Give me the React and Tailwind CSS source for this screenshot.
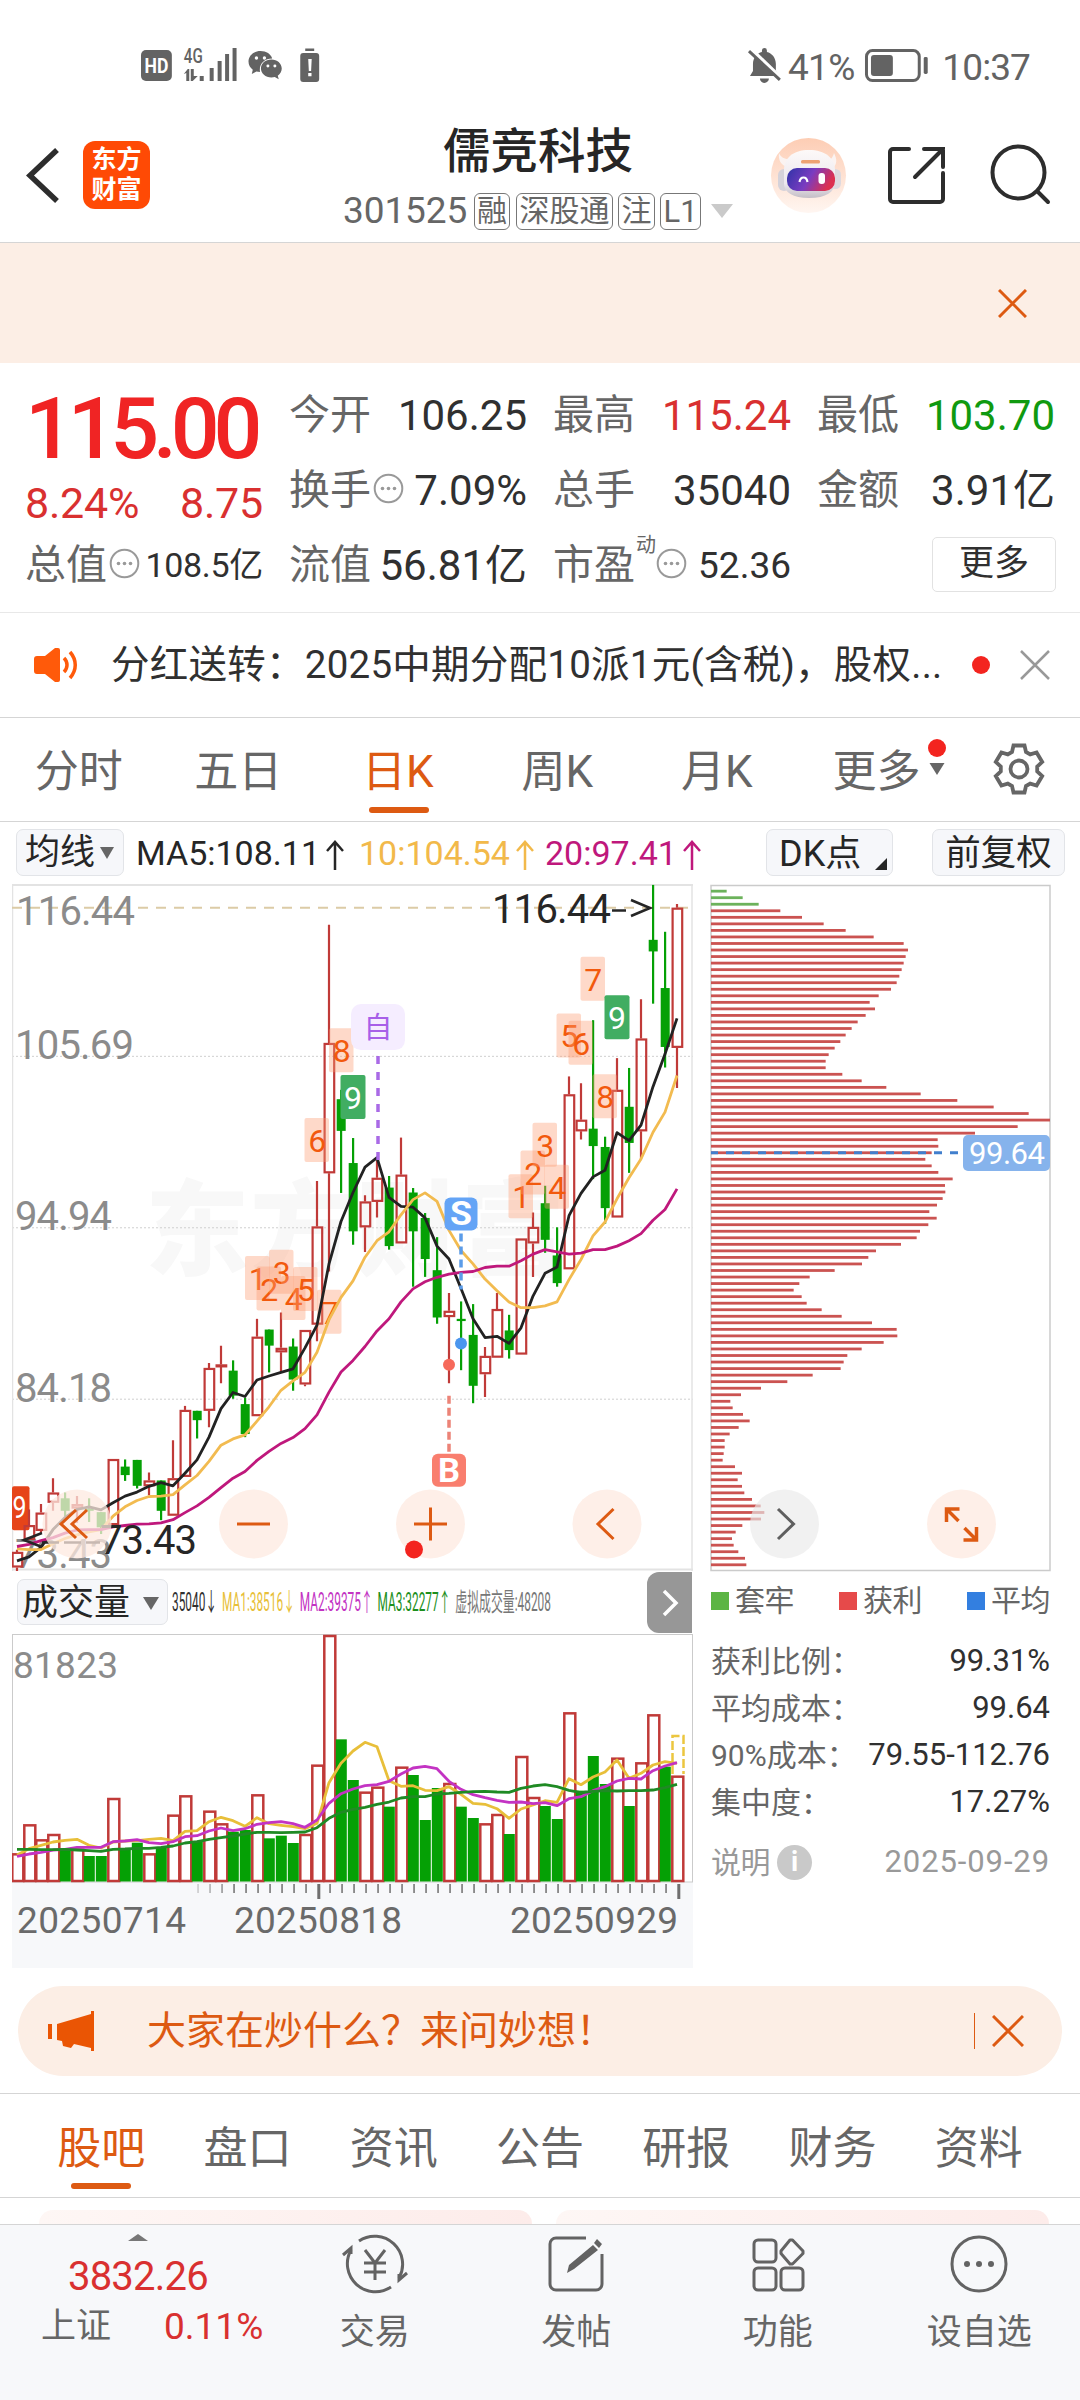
import React from "react";

const RED = "#c03a38";
const GREEN = "#05a005";

// [type, high, bodyTop, bodyBottom, low]
const candles = [
  ["r", 1500, 1505, 1540, 1548], ["r", 1410, 1445, 1478, 1478], ["r", 1398, 1417, 1458, 1462], ["r", 1340, 1372, 1395, 1413],
  ["g", 1372, 1385, 1413, 1425], ["r", 1380, 1398, 1408, 1440], ["g", 1385, 1408, 1413, 1438], ["g", 1416, 1416, 1450, 1465],
  ["r", 1297, 1297, 1445, 1445], ["g", 1298, 1314, 1333, 1346], ["g", 1299, 1299, 1357, 1363], ["r", 1327, 1345, 1358, 1378],
  ["g", 1345, 1345, 1413, 1434], ["r", 1255, 1340, 1424, 1424], ["r", 1178, 1187, 1337, 1337], ["g", 1189, 1189, 1210, 1251],
  ["r", 1082, 1093, 1189, 1226], ["r", 1043, 1085, 1091, 1127], ["g", 1076, 1099, 1155, 1162], ["g", 1160, 1174, 1241, 1248],
  ["r", 983, 1023, 1201, 1201], ["g", 1007, 1007, 1043, 1103], ["r", 969, 1048, 1058, 1103], ["g", 1027, 1045, 1119, 1144],
  ["r", 1008, 1008, 1130, 1134], ["r", 674, 776, 996, 1033], ["r", 100, 365, 657, 877], ["g", 470, 491, 562, 701],
  ["g", 578, 634, 787, 817], ["r", 706, 720, 778, 833], ["r", 628, 667, 721, 756], ["g", 663, 689, 820, 828],
  ["r", 577, 660, 814, 814], ["g", 690, 700, 787, 911], ["g", 746, 757, 849, 889], ["g", 800, 874, 980, 994],
  ["r", 925, 965, 979, 1127], ["g", 944, 983, 988, 1098], ["g", 950, 1019, 1133, 1172], ["r", 1046, 1066, 1107, 1158],
  ["r", 925, 961, 1070, 1070], ["g", 974, 1009, 1053, 1072], ["r", 803, 803, 1063, 1063], ["r", 745, 777, 814, 889],
  ["g", 685, 724, 806, 835], ["g", 778, 841, 903, 911], ["r", 440, 480, 872, 872], ["r", 455, 537, 563, 581],
  ["g", 314, 557, 596, 670], ["g", 575, 598, 735, 770], ["r", 399, 470, 756, 756], ["g", 421, 508, 589, 656],
  ["r", 267, 355, 563, 625], ["g", 11, 134, 160, 277], ["g", 116, 242, 374, 420], ["r", 54, 62, 376, 466],
];

const ma5 = [1525, 1516, 1495, 1455, 1428, 1410, 1404, 1411, 1395, 1380, 1371, 1358, 1350, 1357, 1329, 1299, 1248, 1184, 1148, 1157, 1120, 1111, 1103, 1095, 1048, 997, 860, 765, 700, 643, 622, 711, 731, 733, 757, 820, 849, 915, 983, 1025, 1022, 1038, 1003, 932, 881, 867, 752, 702, 665, 650, 566, 584, 549, 463, 390, 310];
const ma10 = [1498, 1500, 1500, 1487, 1475, 1467, 1460, 1455, 1425, 1404, 1390, 1381, 1380, 1377, 1355, 1334, 1302, 1266, 1252, 1243, 1212, 1180, 1143, 1122, 1103, 1058, 985, 935, 898, 845, 808, 788, 750, 716, 701, 720, 785, 830, 860, 894, 920, 945, 958, 958, 954, 945, 895, 850, 797, 766, 714, 667, 625, 565, 520, 438];
const ma20 = [1493, 1488, 1480, 1473, 1463, 1456, 1455, 1455, 1449, 1446, 1443, 1442, 1440, 1433, 1417, 1402, 1383, 1361, 1340, 1325, 1300, 1280, 1262, 1249, 1229, 1198, 1147, 1102, 1076, 1045, 1010, 983, 945, 916, 900, 890, 883, 879, 877, 868, 865, 865, 853, 838, 828, 833, 838, 836, 828, 828, 820, 808, 792, 762, 738, 692];

const chips = [110, 158, 206, 271, 336, 401, 467, 551, 641, 654, 647, 641, 635, 628, 620, 603, 566, 539, 555, 527, 503, 485, 467, 451, 434, 416, 407, 407, 457, 515, 589, 692, 802, 911, 1016, 1080, 983, 855, 743, 745, 725, 706, 725, 745, 788, 765, 766, 758, 741, 718, 740, 715, 690, 680, 633, 558, 535, 516, 434, 359, 328, 311, 335, 350, 395, 455, 546, 620, 622, 581, 515, 472, 461, 452, 368, 292, 213, 153, 121, 128, 159, 179, 146, 119, 104, 104, 101, 98, 135, 156, 143, 156, 163, 186, 212, 223, 213, 157, 137, 126, 131, 145, 165, 169];

const volColors = "rrrrgrggrggrgrrgrrggrgggrrrggrrgrgggrggrrgrrggrgggrgrrgr";
const volTops = [880, 793, 838, 822, 866, 866, 888, 888, 714, 866, 848, 880, 862, 764, 706, 843, 752, 790, 815, 810, 703, 835, 827, 849, 822, 614, 225, 538, 660, 695, 680, 740, 620, 645, 780, 684, 669, 740, 774, 790, 762, 822, 588, 711, 738, 777, 457, 692, 588, 672, 593, 738, 607, 463, 620, 647];
const vma1 = [885, 866, 856, 846, 841, 838, 856, 864, 846, 843, 842, 838, 835, 842, 814, 812, 785, 772, 782, 799, 773, 791, 796, 800, 806, 790, 668, 610, 573, 547, 560, 662, 679, 677, 691, 692, 680, 703, 730, 733, 746, 775, 747, 735, 722, 727, 656, 674, 651, 636, 600, 655, 640, 615, 605, 610];
const vma2 = [889, 882, 877, 870, 868, 862, 862, 862, 845, 843, 839, 848, 851, 845, 830, 827, 813, 804, 812, 806, 793, 788, 785, 791, 802, 780, 730, 701, 687, 677, 674, 664, 642, 624, 619, 626, 664, 688, 704, 713, 721, 727, 726, 731, 728, 737, 716, 710, 692, 680, 663, 655, 657, 632, 618, 608];
const vma3 = [868, 868, 869, 869, 868, 870, 872, 874, 868, 867, 865, 865, 862, 858, 849, 845, 838, 833, 828, 822, 817, 817, 818, 817, 816, 803, 775, 757, 748, 742, 733, 726, 714, 710, 710, 702, 700, 697, 695, 694, 696, 697, 685, 678, 674, 680, 691, 698, 694, 692, 693, 692, 692, 690, 683, 673];

// [label, left, top]
const badges = [
  ["1", 245, 842], ["2", 256.5, 866], ["3", 269, 828], ["4", 281, 887], ["5", 293, 867], ["6", 304.5, 533], ["7", 317, 918], ["8", 329, 332],
  ["1", 508.5, 659], ["2", 520.5, 606], ["3", 532.5, 544], ["4", 544.5, 638], ["5", 556.5, 299], ["6", 568.5, 315], ["7", 580.5, 172], ["8", 592.5, 435],
];

const cx = (i) => 17 + i * 12;
const ky = (v) => 880 + v / 2.24;
const vy = (v) => 1560 + v / 3;
const line = (data, fy) => data.map((v, i) => `${cx(i)},${fy(v).toFixed(1)}`).join(" ");

function RoundButton({ x, gray, children }) {
  return (
    <g transform={`translate(${x} 1524)`}>
      <circle r="34.5" fill={gray ? "#e9e9e9" : "#feeae0"} fillOpacity={gray ? 0.65 : 0.75} />
      <g fill="none" stroke={gray ? "#5f5f5f" : "#dd5a12"} strokeWidth="3">{children}</g>
    </g>
  );
}

function KChart() {
  return (
    <svg className="block" width="682" height="688" viewBox="12 884 682 688" fontFamily="Roboto, sans-serif">
      <text x="145" y="1268" fontSize="104" fontWeight="900" fill="#f8f8f8" textLength="420" fontFamily="'Noto Sans CJK SC', sans-serif">东方财富</text>
      {[395, 779, 1163].map((v) => (
        <line key={v} x1="12" x2="693" y1={ky(v)} y2={ky(v)} stroke="#cfcfcf" strokeWidth="1" strokeDasharray="2 2" />
      ))}
      <path d="M12.5 884v687M692 884v687" stroke="#e3e3e3" strokeWidth="1.5" />
      <path d="M12 885h681M12 1569.5h681" stroke="#e3e3e3" strokeWidth="2" />
      <path d="M12 907.7H688" stroke="#dccba6" strokeWidth="2" strokeDasharray="10 8" />
      <g fill="#8b8b8b" fontSize="40">
        <text x="16" y="924.5" textLength="119">116.44</text>
        <text x="15" y="1058.5" textLength="119">105.69</text>
        <text x="15" y="1229.5" textLength="97">94.94</text>
        <text x="15" y="1401.5" textLength="97">84.18</text>
        <text x="15" y="1568" textLength="97">73.43</text>
      </g>
      <rect x="12" y={ky(1358)} width="17.5" height="44" rx="2" fill="#e64419" />
      <text x="12.5" y="1518" fontSize="32" fill="#fff" textLength="14" lengthAdjust="spacingAndGlyphs">9</text>
      {candles.map(([t, h, a, b, l], i) => {
        const x = cx(i);
        if (t === "g") {
          return (
            <g key={i} fill={GREEN}>
              <rect x={x - 1} y={ky(h)} width="2.2" height={ky(l) - ky(h)} />
              <rect x={x - 4.3} y={ky(a)} width="9" height={Math.max(ky(b) - ky(a), 2)} />
            </g>
          );
        }
        return (
          <g key={i} stroke={RED} strokeWidth="2.2" fill="none">
            <path d={`M${x} ${ky(h)}V${ky(a)}M${x} ${ky(b)}V${ky(l)}`} />
            <rect x={x - 4.4} y={ky(a) + 1} width="9.6" height={Math.max(ky(b) - ky(a) - 2, 1)} />
          </g>
        );
      })}
      <g fontSize="32" textAnchor="middle">
        {badges.map(([n, x, v], i) => (
          <g key={i}>
            <rect x={x} y={ky(v)} width="24.5" height="44" rx="2" fill="#fd9c70" fillOpacity="0.38" />
            <text x={x + 12.7} y={ky(v) + 34} fill="#f2590d">{n}</text>
          </g>
        ))}
        {[[340.5, 437], [604.5, 258]].map(([x, v]) => (
          <g key={x}>
            <rect x={x} y={ky(v)} width="25" height="44" rx="2" fill="#41ad62" />
            <text x={x + 12.5} y={ky(v) + 34} fill="#fff">9</text>
          </g>
        ))}
      </g>
      <g fill="none" strokeWidth="2.8" strokeLinejoin="round">
        <polyline points={line(ma5, ky)} stroke="#222" />
        <polyline points={line(ma10, ky)} stroke="#f2bb50" />
        <polyline points={line(ma20, ky)} stroke="#bf187c" />
      </g>
      <rect x="351" y={ky(278)} width="54" height="46" rx="10" fill="#f5edff" />
      <text x="378" y={ky(278) + 34} fontSize="29" fill="#a75fe8" textAnchor="middle" fontFamily="'Noto Sans CJK SC', sans-serif">自</text>
      <path d={`M378 ${ky(394)}V${ky(628)}`} stroke="#a96ae6" strokeWidth="3.5" strokeDasharray="8 8" />
      <path d={`M461 ${ky(792)}V${ky(917)}`} stroke="#5b9ce9" strokeWidth="3.5" strokeDasharray="8 5" />
      <path d={`M449 ${ky(1155)}V${ky(1281)}`} stroke="#ec8377" strokeWidth="3.5" strokeDasharray="8 4" />
      <rect x="444.5" y={ky(711)} width="33" height="33" rx="6" fill="#64a4f6" />
      <rect x="432" y={ky(1285)} width="34" height="33" rx="6" fill="#f97e6e" />
      <g fill="#fff" fontSize="33" fontWeight="700" textAnchor="middle">
        <text x="461" y={ky(711) + 28} textLength="22" lengthAdjust="spacingAndGlyphs">S</text>
        <text x="449" y={ky(1285) + 28} textLength="22" lengthAdjust="spacingAndGlyphs">B</text>
      </g>
      <circle cx="461" cy={ky(1038)} r="6" fill="#4b96ee" />
      <circle cx="449" cy={ky(1086)} r="6" fill="#f6695a" />
      <g fill="#262626" fontSize="40">
        <text x="492" y="922.5" textLength="119">116.44</text>
        <text x="100" y="1554" textLength="97">73.43</text>
      </g>
      <g stroke="#262626" strokeWidth="2.6" fill="none">
        <path d="M612 910.5h14M631 900l19 8-19 8" />
        <path d="M42 1533l-18 7 18 7M42 1542.500h17M64 1542.500h17M86 1542.500h14" />
      </g>
      <RoundButton x={77}>
        <path d="M-1-14l-15 14 15 14M10-14L-5 0l15 14" />
      </RoundButton>
      <RoundButton x={253.5}>
        <path d="M-16.500 0h33" />
      </RoundButton>
      <RoundButton x={430.5}>
        <path d="M-16.500 0h33M0-16.500v33" />
      </RoundButton>
      <RoundButton x={607}>
        <path d="M6.500-15L-9 0 6.500 15" />
      </RoundButton>
      <circle cx="414" cy="1549.500" r="9" fill="#f3241f" />
    </svg>
  );
}

function ChipChart() {
  return (
    <svg className="block" width="342" height="688" viewBox="710 884 342 688" fontFamily="Roboto, sans-serif">
      <rect x="711" y="885.500" width="339" height="685" fill="none" stroke="#cbcbcb" strokeWidth="1.5" />
      {chips.map((end, i) => (
        <rect key={i} x="711" y={ky(25 + i * 14.65) - 1.4} width={(end - 63) / 3} height="2.800" fill={i < 3 ? "#6cb25b" : "#cb5351"} />
      ))}
      <path d="M711 1152.800H960" stroke="#417fcd" strokeWidth="3" strokeDasharray="8 8" strokeDashoffset="1" />
      <rect x="963" y="1135" width="87" height="36" rx="5" fill="#86b3ec" />
      <text x="969" y="1164" fontSize="31" fill="#fff" textLength="76">99.64</text>
      <RoundButton x={784.500} gray>
        <path d="M-6.500-15L9 0-6.500 15" />
      </RoundButton>
      <RoundButton x={961.500}>
        <path d="M-15-2v-13H-2M-15-15L-3-3M15 3v13H2M15 16L3 4" strokeWidth="3.500" />
      </RoundButton>
    </svg>
  );
}

function VolumeChart() {
  return (
    <svg className="block" width="682" height="336" viewBox="12 1633 682 336" fontFamily="Roboto, sans-serif">
      <rect x="12" y="1882" width="681" height="86" fill="#f7f8fa" />
      <rect x="12.500" y="1634.500" width="680" height="247.500" fill="#fff" stroke="#cbcbcb" />
      <text x="13" y="1678" fontSize="37" fill="#8b8b8b" textLength="105">81823</text>
      {volTops.map((v, i) => {
        const x = cx(i);
        return volColors[i] === "g" ? (
          <rect key={i} x={x - 5.200} y={vy(v)} width="11" height={1881.500 - vy(v)} fill={GREEN} />
        ) : (
          <rect key={i} x={x - 4.700} y={vy(v) + 1} width="11" height={1880 - vy(v)} fill="#fff" stroke={RED} strokeWidth="2.500" />
        );
      })}
      <path d="M672.500 1774v-38h11v38" fill="none" stroke="#ecc63f" strokeWidth="2.500" strokeDasharray="9 3" />
      <g fill="none" strokeWidth="2.800" strokeLinejoin="round">
        <polyline points={line(vma1, vy)} stroke="#e8bf3a" />
        <polyline points={line(vma2, vy)} stroke="#c333c3" />
        <polyline points={line(vma3, vy)} stroke="#1f8a24" />
      </g>
      {volTops.map((_, i) => {
        if (i < 15) return null;
        const major = i === 25 || i === 55;
        return (
          <rect key={i} x={cx(i) + 0.300} y="1884" width={major ? 3 : 1.500} height={major ? 15 : 9} fill="#6f6f6f" opacity={i < 18 ? 0.350 + (i - 15) * 0.200 : 1} />
        );
      })}
      <g fill="#6a6a6a" fontSize="37">
        <text x="17" y="1933" textLength="169">20250714</text>
        <text x="234" y="1933" textLength="168">20250818</text>
        <text x="510" y="1933" textLength="168">20250929</text>
      </g>
    </svg>
  );
}

function StatusBar() {
  return (
    <div className="flex h-[100px] items-start px-[50px] pt-[46px] text-[#636363]">
      <svg className="ml-[90px]" width="184" height="40" viewBox="140 46 184 40" fill="#636363" fontFamily="Roboto, sans-serif">
        <rect x="141" y="50" width="31" height="31" rx="5" />
        <text x="144.500" y="73" fontSize="20" fontWeight="700" fill="#fff" textLength="24" lengthAdjust="spacingAndGlyphs">HD</text>
        <text x="184" y="63" fontSize="20" fontWeight="500" textLength="19" lengthAdjust="spacingAndGlyphs">4G</text>
        <path d="M184 74l4-5h1.500v12h-3v-8zM191 69h3v7h4l-5 5h-2z" />
        <path d="M200 76h4v5h-4zM204.500 75h0v6h0zM210 68h4v13h-4zM218 61h4v20h-4zM225.500 54h4v27h-4zM233 48h4v33h-4z" />
        <path d="M261 51c-7 0-12 5-12 10.500 0 3.500 1.700 6.300 4.300 8.200l-1 4.300 4.700-2.400c1.200.3 2.300.4 3.600.4-1.400-7.500 4-13.500 12.200-13.500C271.500 54 267 51 261 51z" />
        <path d="M272 59.500c-6 0-10.500 4-10.500 9s4.500 9 10.500 9c1.200 0 2.300-.2 3.400-.5l4 2.300-1-3.600c2.500-1.700 4-4.300 4-7.200 0-5-4.600-9-10.400-9z" />
        <g fill="#fff"><circle cx="257" cy="58" r="1.700" /><circle cx="265" cy="58" r="1.700" /><circle cx="268.500" cy="66" r="1.500" /><circle cx="275.500" cy="66" r="1.500" /></g>
        <path d="M306 48.500h9v2.500h-9zM304 53h13a3 3 0 013 3v23a3 3 0 01-3 3h-13a3 3 0 01-3-3V56a3 3 0 013-3z" />
        <path d="M309 59h3.500l-.6 12h-2.300zM309 73h3.300v3.300H309z" fill="#fff" />
      </svg>
      <svg className="ml-[424px]" width="36" height="40" viewBox="748 46 36 40" fill="#636363">
        <path d="M754 71V64c0-6 4-11 9-12v-1.500a2.500 2.500 0 015 0V52c5 1 9 6 9 12v6.500l4 5.500H751z" />
        <path d="M761 78.500h9a4.500 4.500 0 01-9 0z" />
        <path d="M751 48l31 30" stroke="#fff" strokeWidth="4" />
        <path d="M750 51l31 29" stroke="#636363" strokeWidth="3" />
      </svg>
      <span className="ml-[5px] w-[73px] text-[37px] leading-[43px] tracking-[-0.7px]">41%</span>
      <svg className="ml-[2px]" width="66" height="40" viewBox="863 46 66 40">
        <rect x="866.500" y="50.500" width="53" height="30" rx="6" fill="none" stroke="#636363" strokeWidth="3" />
        <rect x="871" y="55" width="22" height="21" rx="3" fill="#636363" />
        <rect x="924" y="57" width="4" height="17" rx="1.500" fill="#636363" />
      </svg>
      <span className="ml-[14px] text-[37px] leading-[43px] tracking-[-0.9px]">10:37</span>
    </div>
  );
}

function Header() {
  return (
    <div className="flex h-[143px] border-b border-[#d5d5d5]">
      <div className="flex w-[343px] items-start pl-[26px] pt-[41px]">
        <svg className="mt-[5px]" width="34" height="60" viewBox="26 146 34 60" fill="none" stroke="#2d2d2d" strokeWidth="5.500">
          <path d="M57 150L30 175.500 57 201" />
        </svg>
        <div className="ml-[23px] h-[68px] w-[67px] rounded-[12px] bg-[#ff4a05] pt-[4px] text-center text-[25px] leading-[30px] font-bold text-white">
          东方<br />财富
        </div>
      </div>
      <div className="w-[390px] pt-[21px]">
        <div className="text-center text-[47.5px] leading-[62px] font-medium text-[#262626]">儒竞科技</div>
        <div className="mt-[8px] flex items-center text-[#666]">
          <span className="w-[131px] text-[37px] leading-[40px] tracking-[-0.1px]">301525</span>
          <span className="flex h-[37px] w-[36px] items-center justify-center rounded-[6px] border border-[#777] text-[30px] leading-none">融</span>
          <span className="ml-[6px] flex h-[37px] w-[97px] items-center justify-center rounded-[6px] border border-[#777] text-[30px] leading-none">深股通</span>
          <span className="ml-[5px] flex h-[37px] w-[37px] items-center justify-center rounded-[6px] border border-[#777] text-[30px] leading-none">注</span>
          <span className="ml-[5px] flex h-[37px] w-[41px] items-center justify-center rounded-[6px] border border-[#777] text-[31px] leading-none">L1</span>
          <svg className="ml-[10px]" width="22" height="14"><path d="M0 0h22L11 14z" fill="#cacaca" /></svg>
        </div>
      </div>
      <svg className="mt-[32px] ml-[33px]" width="290" height="90" viewBox="766 132 290 90" fill="none">
        <defs>
          <linearGradient id="halo" x1="0" y1="0" x2="0" y2="1"><stop offset="0" stopColor="#fdcdb4" /><stop offset="1" stopColor="#fff6f1" /></linearGradient>
          <linearGradient id="shell" x1="0" y1="0" x2="0" y2="1"><stop offset="0" stopColor="#fdf9f8" /><stop offset="0.700" stopColor="#ece8ee" /><stop offset="1" stopColor="#c4bec6" /></linearGradient>
          <linearGradient id="visor" x1="0" y1="0" x2="1" y2="0.300"><stop offset="0" stopColor="#2f33a8" /><stop offset="0.550" stopColor="#7a3cc0" /><stop offset="1" stopColor="#dc3050" /></linearGradient>
        </defs>
        <circle cx="808.500" cy="175.500" r="37.500" fill="url(#halo)" />
        <path d="M779 153c-1 7 2 12 8 14l5-8c-6 1-11-1-13-6zM834 153c3 6 3 10 0 14l-7-6c4-1 6-4 7-8z" fill="#fbf3f1" />
        <rect x="778" y="169" width="12" height="22" rx="6" fill="#d5d2da" />
        <rect x="830" y="169" width="11" height="20" rx="5.500" fill="#ddd9df" />
        <path d="M784 170c0-12 9-20 25-20s26 8 26 20v12c0 10-9 16-26 16-16 0-25-6-25-14z" fill="url(#shell)" />
        <rect x="801" y="160" width="19" height="3.500" rx="1.500" fill="#eda373" />
        <rect x="787" y="168" width="48" height="23" rx="10" fill="url(#visor)" />
        <path d="M799.500 182c1-6 7-6 8 0" stroke="#fff" strokeWidth="2.200" />
        <rect x="818.500" y="173" width="6.500" height="11" rx="3" fill="#fff" />
        <g stroke="#2d2d2d" strokeWidth="4" strokeLinecap="round">
          <path d="M909 149h-16a3 3 0 00-3 3v47a3 3 0 003 3h47a3 3 0 003-3V173" />
          <path d="M924 149h19v18M943 149l-28 28" />
          <circle cx="1018.500" cy="172.500" r="26" />
          <path d="M1038 192l10 10" />
        </g>
      </svg>
    </div>
  );
}

function Dots() {
  return (
    <svg width="31" height="31" viewBox="0 0 31 31" fill="#999">
      <circle cx="15.500" cy="15.500" r="13.800" fill="none" stroke="#999" strokeWidth="2" />
      <circle cx="9.500" cy="15.500" r="1.800" /><circle cx="15.500" cy="15.500" r="1.800" /><circle cx="21.500" cy="15.500" r="1.800" />
    </svg>
  );
}

function Cell({ label, value, color = "text-[#303030]", size = "text-[42px]", info, sup }) {
  return (
    <div className="flex h-[75px] items-center text-[41px] text-[#666]">
      <span>{label}</span>
      {sup && <span className="-mr-[2px] mb-[42px] ml-px text-[20px] leading-none">{sup}</span>}
      {info && <span className="mb-[4px] ml-[2px]"><Dots /></span>}
      <span className={`ml-auto whitespace-nowrap ${size} ${color}`}>{value}</span>
    </div>
  );
}

function Quote() {
  return (
    <div className="flex h-[250px] gap-[26px] border-b border-[#e8e8e8] px-[25px] pt-[15px]">
      <div className="w-[238px]">
        <div className="flex h-[100px] items-center pt-[2px] text-[86px] leading-none font-medium tracking-[-6.2px] text-[#f02424]">115.00</div>
        <div className="flex h-[50px] items-center justify-between text-[43px] tracking-[-0.2px] text-[#d93030]">
          <span>8.24%</span>
          <span>8.75</span>
        </div>
        <Cell label="总值" value="108.5亿" size="text-[34px] tracking-[-0.3px]" info />
      </div>
      <div className="w-[238px]">
        <Cell label="今开" value="106.25" />
        <Cell label="换手" value="7.09%" info />
        <Cell label="流值" value="56.81亿" />
      </div>
      <div className="w-[238px]">
        <Cell label="最高" value="115.24" color="text-[#d93030]" />
        <Cell label="总手" value="35040" />
        <Cell label="市盈" value="52.36" size="text-[37px]" sup="动" info />
      </div>
      <div className="w-[238px]">
        <Cell label="最低" value="103.70" color="text-[#109a10]" />
        <Cell label="金额" value="3.91亿" />
        <div className="-mr-px ml-auto mt-[9px] flex h-[55px] w-[124px] items-center justify-center rounded-[5px] border border-[#e2e2e2] text-[35px] text-[#303030]">更多</div>
      </div>
    </div>
  );
}

function Notice() {
  return (
    <div className="flex h-[105px] items-center border-b border-[#d5d5d5] pl-[34px] text-[38.5px] text-[#303030]">
      <svg width="44" height="36" viewBox="0 0 44 36" fill="#ff5a0a">
        <path d="M3 9h8L21 1h3a2 2 0 012 2v30a2 2 0 01-2 2h-3L11 27H3a3 3 0 01-3-3V12a3 3 0 013-3z" />
        <path d="M30 11c4 4 4 10 0 14M36 5c7 8 7 18 0 26" fill="none" stroke="#ff5a0a" strokeWidth="3.500" />
      </svg>
      <span className="ml-[33px] w-[834px] overflow-hidden tracking-[0.25px] whitespace-nowrap">分红送转：2025中期分配10派1元(含税)，股权...</span>
      <span className="ml-[27px] size-[18px] rounded-full bg-[#f3241f]" />
      <svg className="ml-[30px]" width="30" height="30" viewBox="0 0 30 30" stroke="#999" strokeWidth="2.500"><path d="M1 1l28 28M29 1L1 29" /></svg>
    </div>
  );
}

function PeriodTabs() {
  const tabs = ["分时", "五日", "日K", "周K", "月K"];
  return (
    <div className="flex h-[104px] border-b border-[#d5d5d5] text-[44px] text-[#666]">
      {tabs.map((tab) => (
        <div key={tab} className={tab === "日K" ? "flex w-[159.500px] flex-col items-center pt-[21px] text-[#dd5a12]" : "flex w-[159.500px] flex-col items-center pt-[21px]"}>
          <span className="-ml-[2px] leading-[66px]">{tab}</span>
          {tab === "日K" && <span className="mt-[2px] h-[6px] w-[60px] rounded-full bg-[#dd5a12]" />}
        </div>
      ))}
      <div className="flex w-[190px] pt-[21px] pl-[35px]">
        <span className="leading-[66px]">更多</span>
        <svg className="ml-[6px]" width="20" height="60" viewBox="0 0 20 60"><circle cx="10" cy="9" r="9" fill="#f3241f" /><path d="M2.500 24h15L10 36z" fill="#666" /></svg>
      </div>
      <svg className="mt-[24px] ml-[4px]" width="54" height="54" viewBox="-27 -27 54 54" fill="none" stroke="#666" strokeWidth="3.800">
        <path d="M-5.500-23.500H5.500L7-17 11.200-14.600 17.600-16.500 23.200-7 18.200-2.400V2.400L23.200 7 17.600 16.500 11.200 14.600 7 17 5.500 23.500H-5.500L-7 17-11.200 14.600-17.600 16.500-23.200 7-18.200 2.400V-2.400L-23.200-7-17.600-16.500-11.200-14.600-7-17Z" />
        <circle r="8.500" />
      </svg>
    </div>
  );
}

function IndicatorRow() {
  return (
    <div className="flex h-[62px] items-start pl-4 pt-[7px] text-[34px] text-[#262626]">
      <div className="flex h-[47px] w-[108px] items-center rounded-[7px] border border-[#e2e4e8] bg-[#f6f7fa] pt-px pl-[8px]">
        <span className="text-[35px]">均线</span>
        <svg className="ml-[5px]" width="14" height="12"><path d="M0 0h14L7 12z" fill="#666" /></svg>
      </div>
      <div className="ml-[12px] flex leading-[49px] whitespace-nowrap">
        <span className="flex w-[223px]">MA5:108.11<Arrow color="#262626" /></span>
        <span className="flex w-[186px] text-[#f2b94a]">10:104.54<Arrow color="#f2b94a" /></span>
        <span className="flex w-[221px] text-[#bf187c]">20:97.41<Arrow color="#bf187c" /></span>
      </div>
      <div className="relative flex h-[47px] w-[127px] items-center rounded-[7px] border border-[#e2e4e8] bg-[#f6f7fa] pt-[3px] pl-[12px] text-[36px]">
        DK点
        <svg className="absolute right-[5px] bottom-[5px]" width="12" height="12"><path d="M12 0v12H0z" fill="#262626" /></svg>
      </div>
      <div className="ml-[39px] flex h-[47px] w-[133px] items-center justify-center rounded-[7px] border border-[#e2e4e8] bg-[#f6f7fa] pt-[3px] text-[35.5px]">前复权</div>
    </div>
  );
}

function Arrow({ color }) {
  return (
    <svg className="mt-[10px] ml-[5px]" width="20" height="32" viewBox="0 0 20 32" fill="none" stroke={color} strokeWidth="2.500">
      <path d="M10 31V3M2 12l8-9 8 9" />
    </svg>
  );
}

function Legend({ color, children }) {
  return (
    <span className="flex items-center gap-[6px]">
      <span className={`size-[18px] ${color}`} />
      {children}
    </span>
  );
}

function Stat({ label, value }) {
  return (
    <div className="flex h-[47px] items-center justify-between text-[30px]">
      <span className="text-[#666]">{label}</span>
      <span className="text-[31px] text-[#303030]">{value}</span>
    </div>
  );
}

function Charts() {
  return (
    <div className="flex h-[1086px] pl-3">
      <div className="w-[682px]">
        <KChart />
        <div className="flex h-[61px] items-start">
          <div className="ml-[5px] mt-[7px] flex h-[46px] w-[151px] items-center rounded-[7px] border border-[#e2e4e8] bg-[#f6f7fa] pt-[2px] pl-[4px] text-[36px] text-[#262626]">
            成交量
            <svg className="ml-[13px]" width="16" height="13"><path d="M0 0h16L8 13z" fill="#666" /></svg>
          </div>
          <div className="mt-[15px] ml-[4px] w-[475px]">
            <div className="flex w-[780px] origin-left scale-x-[0.475] gap-[10px] text-[25px] leading-[32px] whitespace-nowrap text-[#303030]">
              <span>35040↓</span>
              <span className="text-[#e8bf3a]">MA1:38516↓</span>
              <span className="text-[#c333c3]">MA2:39375↑</span>
              <span className="text-[#1c8f1c]">MA3:32277↑</span>
              <span className="text-[#777]">虚拟成交量:48208</span>
            </div>
          </div>
          <div className="flex h-[61px] w-[45px] shrink-0 items-center justify-center rounded-l-[12px] bg-[#979797]">
            <svg width="18" height="28" viewBox="0 0 18 28" fill="none" stroke="#fff" strokeWidth="3.500"><path d="M3 2l12 12L3 26" /></svg>
          </div>
        </div>
        <VolumeChart />
      </div>
      <div className="ml-4 w-[342px]">
        <ChipChart />
        <div className="flex h-[56px] items-center justify-between pt-px pr-[2px] pl-px text-[30px] tracking-[-0.5px] text-[#666]">
          <Legend color="bg-[#5cb544]">套牢</Legend>
          <Legend color="bg-[#e64a4a]">获利</Legend>
          <Legend color="bg-[#337fe0]">平均</Legend>
        </div>
        <div className="mt-[10px] pr-[2px] pl-px">
          <Stat label="获利比例：" value="99.31%" />
          <Stat label="平均成本：" value="99.64" />
          <Stat label="90%成本：" value="79.55-112.76" />
          <Stat label="集中度：" value="17.27%" />
          <div className="mt-[12px] flex h-[48px] items-center text-[30px] text-[#999]">
            <span className="tracking-[-0.5px]">说明</span>
            <span className="ml-[7px] flex size-[35px] items-center justify-center rounded-full bg-[#c9c9c9] text-[27px] leading-none font-bold text-white">i</span>
            <span className="ml-auto text-[31px] tracking-[0.9px]">2025-09-29</span>
          </div>
        </div>
      </div>
    </div>
  );
}

function Banner() {
  return (
    <div className="mx-[18px] mt-[16px] flex h-[90px] items-center rounded-full bg-[#fceee5] pl-[30px] text-[39px] text-[#dd5a12]">
      <svg width="46" height="40" viewBox="0 0 46 40" fill="#ea5504">
        <path d="M0 13h4v15H0zM9 13L43 3V0h3v40h-3v-3l-17-4-3 4-8-2-1-5-5-1z" />
      </svg>
      <span className="ml-[53px]">大家在炒什么？来问妙想！</span>
      <span className="ml-auto h-[36px] w-px bg-[#dd5a12]" />
      <svg className="mr-[38px] ml-[17px]" width="32" height="32" viewBox="0 0 32 32" stroke="#dd5a12" strokeWidth="3"><path d="M1 1l30 30M31 1L1 31" /></svg>
    </div>
  );
}

function ContentTabs() {
  const tabs = ["股吧", "盘口", "资讯", "公告", "研报", "财务", "资料"];
  return (
    <div className="mt-[17px] flex h-[105px] border-t border-b border-[#d5d5d5] px-[28px] text-[44px] text-[#666]">
      {tabs.map((tab, i) => (
        <div key={tab} className={i === 0 ? "flex flex-1 flex-col items-center pt-[22px] text-[#dd5a12]" : "flex flex-1 flex-col items-center pt-[22px]"}>
          <span className="leading-[66px]">{tab}</span>
          {i === 0 && <span className="mt-[1px] h-[6px] w-[60px] rounded-full bg-[#dd5a12]" />}
        </div>
      ))}
    </div>
  );
}

function NavItem({ label, children }) {
  return (
    <div className="flex w-[201.500px] flex-col items-center pt-[9px]">
      <svg width="66" height="60" viewBox="-33 -30 66 60" fill="none" stroke="#636363" strokeWidth="3">{children}</svg>
      <span className="mt-[13px] text-[35px] leading-[52px] text-[#666]">{label}</span>
    </div>
  );
}

function BottomBar() {
  return (
    <div className="flex h-[176px] border-t border-[#d5d5d5] bg-[#f7f8fa]">
      <div className="w-[274px] pt-[9px]">
        <svg className="ml-[128px]" width="20" height="7"><path d="M0 7L10 0l10 7z" fill="#777" /></svg>
        <div className="mt-[11px] pl-[68px] text-[40px] leading-[50px] tracking-[-0.8px] text-[#d93030]">3832.26</div>
        <div className="flex pt-px pl-[41px] text-[35px] leading-[48px] text-[#666]">
          上证
          <span className="ml-[53px] text-[37px] text-[#d93030]">0.11%</span>
        </div>
      </div>
      <NavItem label="交易">
        <path d="M-16-23A28 28 0 0124 14M16 23A28 28 0 01-24-14" />
        <path d="M-32-9l8-7v6M32 9l-8 7v-6" strokeWidth="3" />
        <path d="M-10-14L0-1 10-14M0-1v17M-11-1h22M-11 8h22" />
      </NavItem>
      <NavItem label="发帖">
        <path d="M10-26h-30a6 6 0 00-6 6V20a6 6 0 006 6H20a6 6 0 006-6V-10" />
        <path d="M21-25l5 5-3 4-5-5zM17-19l5 5L-2 5l-7 4 2-8z" fill="#636363" stroke="none" />
      </NavItem>
      <NavItem label="功能">
        <rect x="-24" y="-24" width="22" height="22" rx="4" />
        <rect x="-24" y="4" width="22" height="22" rx="4" />
        <rect x="3" y="4" width="22" height="22" rx="4" />
        <path d="M12-24l2.500 0L25-13v2.500L14.500 0H12L3-10.500V-13z" strokeLinejoin="round" />
      </NavItem>
      <NavItem label="设自选">
        <circle r="27" />
        <g fill="#636363" stroke="none"><circle cx="-12" r="3" /><circle r="3" /><circle cx="12" r="3" /></g>
      </NavItem>
    </div>
  );
}

export default function App() {
  return (
    <div className="h-[2400px] w-[1080px] overflow-hidden bg-white font-[Roboto,'Noto_Sans_CJK_SC',sans-serif]">
      <StatusBar />
      <Header />
      <div className="flex h-[120px] items-center justify-end bg-[#fceee5] pr-[53px]">
        <svg width="29" height="29" viewBox="0 0 29 29" stroke="#dd5a12" strokeWidth="3"><path d="M1 1l27 27M28 1L1 28" /></svg>
      </div>
      <Quote />
      <Notice />
      <PeriodTabs />
      <IndicatorRow />
      <Charts />
      <Banner />
      <ContentTabs />
      <div className="flex h-[26px] items-end gap-[24px] pr-[31px] pl-[39px]">
        <div className="h-[14px] flex-1 rounded-t-[20px] bg-gradient-to-r from-[#fef7f5] to-[#fdecea]" />
        <div className="h-[14px] flex-1 rounded-t-[20px] bg-gradient-to-r from-[#fef7f5] to-[#fdecea]" />
      </div>
      <BottomBar />
    </div>
  );
}
